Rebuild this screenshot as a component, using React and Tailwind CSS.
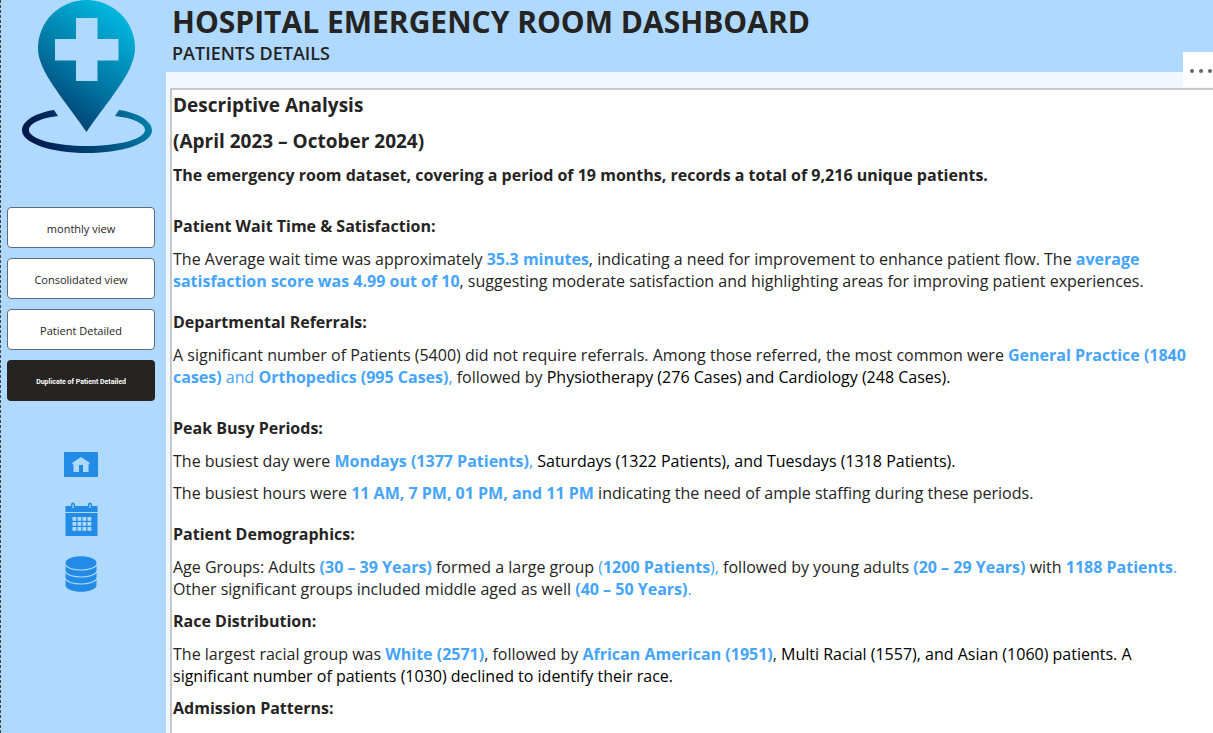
import React from "react";

const views = [
  { label: "monthly view" },
  { label: "Consolidated view" },
  { label: "Patient Detailed" },
];

function Logo() {
  return (
    <svg className="block h-[154px] w-[132px]" viewBox="21 0 132 154" role="img" aria-label="Hospital location">
      <defs>
        <linearGradient id="pin" gradientUnits="userSpaceOnUse" x1="126" y1="22" x2="38" y2="144">
          <stop offset="0" stopColor="#00b4dc" />
          <stop offset="0.5" stopColor="#006e9b" />
          <stop offset="1" stopColor="#001a4d" />
        </linearGradient>
        <linearGradient id="ring" gradientUnits="userSpaceOnUse" x1="152" y1="110" x2="36" y2="146">
          <stop offset="0" stopColor="#0083ac" />
          <stop offset="0.5" stopColor="#004a78" />
          <stop offset="1" stopColor="#001a4d" />
        </linearGradient>
      </defs>
      <path
        fill="url(#pin)"
        fillRule="evenodd"
        d="M86.5 132 C73 112 52 87 43 68 C39.500 60 38 54 38 48 A48.500 48 0 0 1 135 48 C135 54 133.500 60 130 68 C121 87 100 112 86.500 132Z M76 18 V39 H55 V60.500 H76 V81 H97.500 V60.500 H118.500 V39 H97.500 V18Z"
      />
      <path
        fill="url(#ring)"
        d="M54 110 C35 113 22 121 22 130.500 C22 143 51 153 87 153 C123 153 152 143 152 130.500 C152 121 139 113 119 110 L115 116 C133 118 145 123.500 145 130 C145 139 119 146 87 146 C55 146 29 139 29 130 C29 123.500 41 118 58 116Z"
      />
    </svg>
  );
}

function HomeIcon() {
  return (
    <svg className="block h-[25px] w-[34px]" viewBox="0 0 34 25" aria-hidden="true">
      <rect width="34" height="25" rx="1" fill="#228be6" />
      <path fill="#b0d9ff" d="M17 5 L26 11 L25 12.500 H24.500 V20 H19 V13 H15 V20 H9.500 V12.500 H9 L8 11Z" />
    </svg>
  );
}

function CalendarIcon() {
  return (
    <svg className="block h-[35px] w-[33px]" viewBox="0 0 33 35" aria-hidden="true">
      <path fill="#228be6" d="M0.500 4 H6 V2.500 A2 2 0 0 1 10 2.500 V4 H23 V2.500 A2 2 0 0 1 27 2.500 V4 H32.500 V10 H0.500Z M0.500 11 H32.500 V33 Q32.500 34 31.500 34 H1.500 Q0.500 34 0.500 33Z" />
      <path stroke="#b0d9ff" strokeWidth="1.300" d="M8 2.500 V6 M25 2.500 V6" />
      {[15, 20, 25].map((y) =>
        [7.5, 12.5, 17.5, 22.5].map((x) => (
          <rect key={`${x}-${y}`} x={x} y={y} width="3.800" height="3.800" fill="#b0d9ff" />
        ))
      )}
    </svg>
  );
}

function DatabaseIcon() {
  return (
    <svg className="block h-[36px] w-[32px]" viewBox="0 0 32 36" aria-hidden="true">
      <path fill="#228be6" d="M0.500 7 C0.500 -2 31.500 -2 31.500 7 V29 C31.500 38 0.500 38 0.500 29Z" />
      <path
        fill="none"
        stroke="#b0d9ff"
        strokeWidth="1.200"
        d="M0 8 C2 16 30 16 32 8 M0 15 C2 23 30 23 32 15 M0 22 C2 30 30 30 32 22"
      />
    </svg>
  );
}

function Hi({ children }) {
  return <strong className="font-bold text-[#45a4fc]">{children}</strong>;
}

function Soft({ children }) {
  return <span className="text-[#45a4fc]">{children}</span>;
}

function Dark({ children }) {
  return <span className="text-black">{children}</span>;
}

function Section({ title, className, children }) {
  return (
    <section className={className}>
      <h3 className="font-bold">{title}</h3>
      {children && <div className="mt-[11px] flex flex-col gap-[10px]">{children}</div>}
    </section>
  );
}

export default function App() {
  return (
    <div className="flex h-screen overflow-hidden bg-[#f0f7ff] font-['Open_Sans','Noto_Sans',sans-serif] text-[#252423]">
      <aside className="flex w-[166px] shrink-0 flex-col border-l border-dashed border-[#444] bg-[#b0d9ff]">
        <div className="pl-5">
          <Logo />
        </div>
        <nav className="mt-[53px] flex flex-col gap-[10px] pr-[11px] pl-[6px]">
          {views.map((v) => (
            <button
              key={v.label}
              type="button"
              className="h-[41px] rounded border border-[#5f6b78] bg-white pt-[3px] text-[11px] font-medium"
            >
              {v.label}
            </button>
          ))}
          <button type="button" className="h-[41px] rounded bg-[#252423] pt-[3px] font-['Roboto',sans-serif] text-[7px] font-bold text-white">
            Duplicate of Patient Detailed
          </button>
        </nav>
        <div className="mt-[51px] flex flex-col items-center pr-[5px]">
          <button type="button" aria-label="Home">
            <HomeIcon />
          </button>
          <button type="button" aria-label="Calendar" className="mt-[25px]">
            <CalendarIcon />
          </button>
          <button type="button" aria-label="Data" className="mt-[19px]">
            <DatabaseIcon />
          </button>
        </div>
      </aside>

      <div className="relative flex min-w-0 flex-1 flex-col">
        <header className="h-[72px] shrink-0 bg-[#b0d9ff] pl-[6px]">
          <h1 className="pt-[2px] text-[30px] leading-[40px] font-bold whitespace-nowrap">HOSPITAL EMERGENCY ROOM DASHBOARD</h1>
          <p className="text-[18px] leading-[22px] font-semibold">PATIENTS DETAILS</p>
        </header>
        <button
          type="button"
          aria-label="More options"
          className="absolute top-[52px] right-0 flex h-[35px] w-[30px] items-center justify-end gap-[5px] bg-white pt-[3px] pr-px"
        >
          <span className="size-1 rounded-full bg-[#666]" />
          <span className="size-1 rounded-full bg-[#666]" />
          <span className="size-1 rounded-full bg-[#666]" />
        </button>

        <main className="mt-4 ml-1 flex-1 overflow-hidden border-t-2 border-l-2 border-[#c8c8c8] bg-white pt-[3px] pl-px text-[16px] leading-[22px] whitespace-nowrap">
          <h2 className="text-[19px] leading-[24px] font-bold">Descriptive Analysis</h2>
          <h2 className="mt-3 text-[19px] leading-[24px] font-bold">(April 2023 – October 2024)</h2>
          <p className="mt-[11px] font-bold">
            The emergency room dataset, covering a period of 19 months, records a total of 9,216 unique patients.
          </p>

          <Section className="mt-[29px]" title="Patient Wait Time & Satisfaction:">
            <p>
              The Average wait time was approximately <Hi>35.3 minutes</Hi>, indicating a need for improvement to enhance patient flow. The <Hi>average</Hi>
              <br />
              <Hi>satisfaction score was 4.99 out of 10</Hi>, suggesting moderate satisfaction and highlighting areas for improving patient experiences.
            </p>
          </Section>

          <Section className="mt-[19px]" title="Departmental Referrals:">
            <p>
              A significant number of Patients (5400) did not require referrals. Among those referred, the most common were <Hi>General Practice (1840</Hi>
              <br />
              <Hi>cases)</Hi> <Soft>and</Soft> <Hi>Orthopedics (995 Cases)</Hi><Soft>,</Soft> followed by <Dark>Physiotherapy (276 Cases) and Cardiology (248 Cases).</Dark>
            </p>
          </Section>

          <Section className="mt-[29px]" title="Peak Busy Periods:">
            <p>
              The busiest day were <Hi>Mondays (1377 Patients)</Hi><Soft>,</Soft> <Dark>Saturdays (1322 Patients), and Tuesdays (1318 Patients).</Dark>
            </p>
            <p>
              The busiest hours were <Hi>11 AM, 7 PM, 01 PM, and 11 PM</Hi> indicating the need of ample staffing during these periods.
            </p>
          </Section>

          <Section className="mt-[19px]" title="Patient Demographics:">
            <p>
              Age Groups: Adults <Hi>(30 – 39 Years)</Hi> formed a large group <Soft>(</Soft><Hi>1200 Patients</Hi><Soft>),</Soft> followed by young adults <Hi>(20 – 29 Years)</Hi> with <Hi>1188 Patients</Hi><Soft>.</Soft>
              <br />
              Other significant groups included middle aged as well <Hi>(40 – 50 Years)</Hi><Soft>.</Soft>
            </p>
          </Section>

          <Section className="mt-[10px]" title="Race Distribution:">
            <p>
              The largest racial group was <Hi>White (2571)</Hi>, followed by <Hi>African American (1951)</Hi>, <Dark>Multi Racial (1557), and Asian (1060) patients. A</Dark>
              <br />
              <Dark>significant number of patients (1030) declined to identify their race.</Dark>
            </p>
          </Section>

          <Section className="mt-[10px]" title="Admission Patterns:" />
        </main>
      </div>
    </div>
  );
}
